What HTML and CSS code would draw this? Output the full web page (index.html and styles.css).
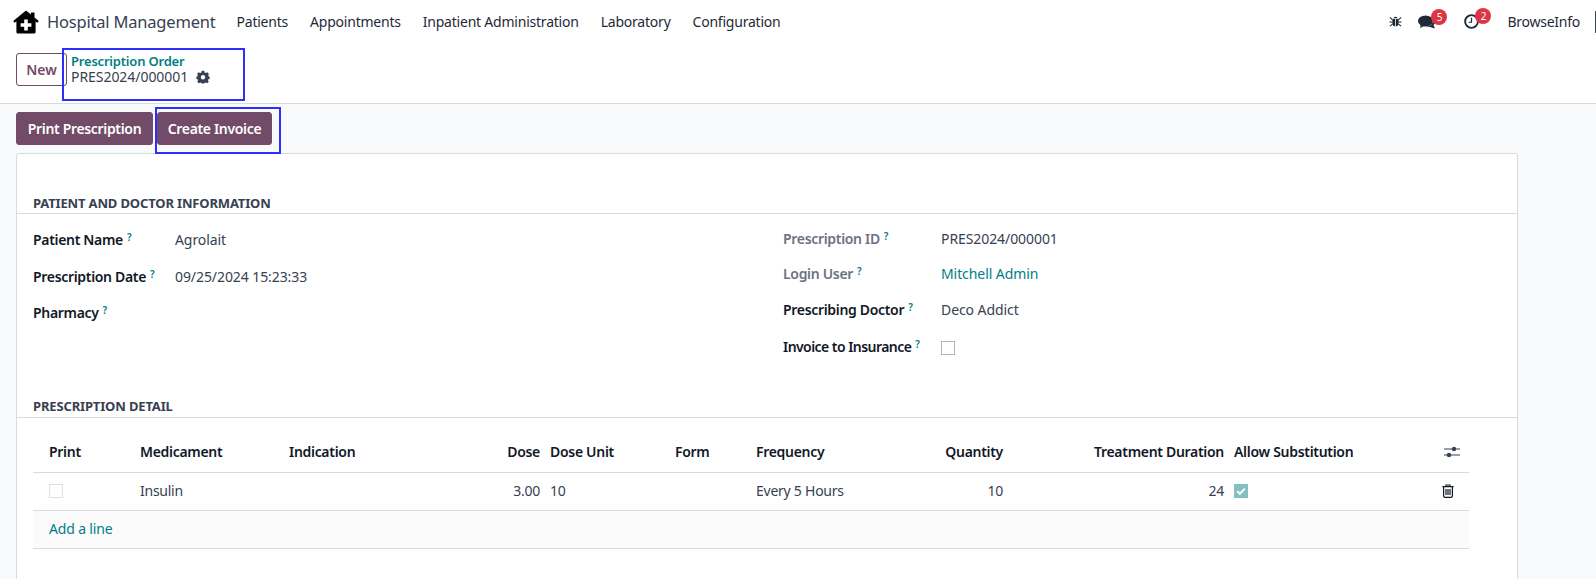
FILE: index.html
```html
<!DOCTYPE html>
<html lang="en">
<head>
<meta charset="utf-8">
<title>Prescription Order</title>
<link rel="stylesheet" href="styles.css">
</head>
<body>
<header class="navbar">
  <svg class="brand-icon" viewBox="0 0 26 24"><path d="M13 .5 L18 4.6 V2.5 H21.5 V7.4 L25.8 11 L24.4 12.8 L22.6 11.4 V22 Q22.6 23.6 21 23.6 H5 Q3.4 23.6 3.4 22 V11.4 L1.6 12.8 L.2 11 Z" fill="#000"/><path d="M11.2 9.6 H14.8 V13.2 H18.4 V16.8 H14.8 V20.4 H11.2 V16.8 H7.6 V13.2 H11.2 Z" fill="#fff"/></svg>
  <span class="brand">Hospital Management</span>
  <nav class="menu">
    <a>Patients</a><a>Appointments</a><a>Inpatient Administration</a><a>Laboratory</a><a>Configuration</a>
  </nav>
  <div class="systray">
    <svg class="bug" viewBox="0 0 14 14"><path d="M4.5 3.5 Q7 .5 9.5 3.5 Z M3.6 4.3 H6.6 V12.5 Q3.6 12 3.6 9 Z M7.4 4.3 H10.4 V9 Q10.4 12 7.4 12.5 Z" fill="#1f2a37"/><path d="M1 2.5 L3.6 5 M13 2.5 L10.4 5 M.5 7.5 H3.6 M13.5 7.5 H10.4 M1 12 L3.8 9.8 M13 12 L10.2 9.8" stroke="#1f2a37" stroke-width="1.2" fill="none"/></svg>
    <span class="tray-item chat">
      <svg class="chat-icon" viewBox="0 0 18 14"><ellipse cx="7.5" cy="6" rx="7.5" ry="5.5" fill="#1f2a37"/><path d="M3 9 L2 13 L7 10.5 Z" fill="#1f2a37"/><path d="M16 4.5 Q18.5 8 15.5 10 L17 13.5 L12 12 Q10 12 8.5 11.6 Q14.5 11 16 4.5 Z" fill="#1f2a37"/></svg>
      <span class="badge">5</span>
    </span>
    <span class="tray-item clock">
      <svg class="clock-icon" viewBox="0 0 16 16"><circle cx="8" cy="8" r="6.8" fill="none" stroke="#1f2a37" stroke-width="2"/><path d="M8 4 V8.8 H5" fill="none" stroke="#1f2a37" stroke-width="1.3"/></svg>
      <span class="badge">2</span>
    </span>
    <span class="user">BrowseInfo</span>
    <span class="edge"></span>
  </div>
</header>

<section class="control">
  <button class="btn btn-new">New</button>
  <div class="crumb">
    <a class="crumb-parent">Prescription Order</a>
    <div class="crumb-current">PRES2024/000001
      <svg class="gear" viewBox="0 0 14 14"><path fill-rule="evenodd" d="M5.8.8 H8.2 L8.6 2.5 L9.9 3.1 L11.4 2.2 L13 3.9 L12 5.3 L12.6 6.1 L13.6 6.9 V8.9 L12.4 9.2 L11.9 10.3 L12.8 11.8 L11.2 13.2 L9.8 12.4 L8.6 12.9 L8.2 13.6 H5.8 L5.4 12.9 L4.2 12.4 L2.8 13.2 L1.2 11.8 L2.1 10.3 L1.6 9.2 L.4 8.9 V6.9 L1.4 6.1 L2 5.3 L1 3.9 L2.6 2.2 L4.1 3.1 L5.4 2.5 Z M7 5 A2.2 2.2 0 1 0 7 9.4 A2.2 2.2 0 1 0 7 5 Z" fill="#374151"/></svg>
    </div>
  </div>
</section>

<main class="content">
  <div class="actions">
    <button class="btn btn-primary btn-print">Print Prescription</button>
    <button class="btn btn-primary btn-invoice">Create Invoice</button>
  </div>
  <article class="sheet">
    <h2 class="sep sep-first">PATIENT AND DOCTOR INFORMATION</h2>
    <div class="columns">
      <div class="col col-left">
        <div class="field"><label class="lbl">Patient Name<sup>?</sup></label><span class="val">Agrolait</span></div>
        <div class="field"><label class="lbl">Prescription Date<sup>?</sup></label><span class="val">09/25/2024 15:23:33</span></div>
        <div class="field"><label class="lbl">Pharmacy<sup>?</sup></label><span class="val"></span></div>
      </div>
      <div class="col col-right">
        <div class="field"><label class="lbl muted">Prescription ID<sup>?</sup></label><span class="val">PRES2024/000001</span></div>
        <div class="field"><label class="lbl muted">Login User<sup>?</sup></label><a class="val link">Mitchell Admin</a></div>
        <div class="field"><label class="lbl">Prescribing Doctor<sup>?</sup></label><span class="val">Deco Addict</span></div>
        <div class="field"><label class="lbl lbl-tight">Invoice to Insurance<sup>?</sup></label><span class="val"><span class="check check-form"></span></span></div>
      </div>
    </div>
    <h2 class="sep sep-detail">PRESCRIPTION DETAIL</h2>
    <table class="lines">
      <colgroup>
        <col class="c1"><col class="c2"><col class="c3"><col class="c4"><col class="c5"><col class="c6"><col class="c7"><col class="c8"><col class="c9"><col class="c10"><col class="c11">
      </colgroup>
      <thead>
        <tr>
          <th>Print</th><th>Medicament</th><th>Indication</th><th class="num">Dose</th><th>Dose Unit</th><th>Form</th><th>Frequency</th><th class="num">Quantity</th><th class="num">Treatment Duration</th><th>Allow Substitution</th>
          <th class="icon-cell"><svg class="sliders" viewBox="0 0 16 14"><path d="M0 4 H16 M0 10 H16" stroke="#374151" stroke-width="1.1"/><circle cx="10" cy="4" r="2.2" fill="#374151"/><circle cx="5" cy="10" r="2.2" fill="#374151"/></svg></th>
        </tr>
      </thead>
      <tbody>
        <tr>
          <td class="check-cell"><span class="check check-off"></span></td><td>Insulin</td><td></td><td class="num">3.00</td><td>10</td><td></td><td>Every 5 Hours</td><td class="num">10</td><td class="num">24</td>
          <td class="check-cell"><span class="check check-on"><svg viewBox="0 0 14 14"><path d="M3.2 7.2 L5.9 9.8 L10.8 4.6" fill="none" stroke="#fff" stroke-width="2"/></svg></span></td>
          <td class="icon-cell"><svg class="trash" viewBox="0 0 12 14"><path d="M4 2.4 V1 H8 V2.4 M.4 2.6 H11.6 M1.6 2.6 V12 Q1.6 13.3 3 13.3 H9 Q10.4 13.3 10.4 12 V2.6 M4 5 V11 M6 5 V11 M8 5 V11" fill="none" stroke="#111827" stroke-width="1.2"/></svg></td>
        </tr>
      </tbody>
      <tfoot>
        <tr><td colspan="11"><a class="link">Add a line</a></td></tr>
      </tfoot>
    </table>
  </article>
</main>

<div class="highlight hl-crumb"></div>
<div class="highlight hl-invoice"></div>
</body>
</html>
```
FILE: styles.css
```css
* { box-sizing: border-box; }
html, body { margin: 0; height: 579px; overflow: hidden; }
body {
  position: relative;
  font-family: "Noto Sans", "Open Sans", sans-serif;
  font-size: 14px;
  letter-spacing: -0.17px;
  color: #374151;
  background: #f9fafb;
}
.navbar {
  height: 46px;
  background: #fff;
  display: flex;
  align-items: center;
  padding: 0 0 3px 13px;
  color: #1f2a37;
}
.brand-icon { width: 26px; height: 24px; }
.brand { margin-left: 8px; font-size: 16.5px; letter-spacing: -0.2px; color: #374151; }
.menu { display: flex; gap: 22px; margin-left: 21px; letter-spacing: -0.22px; }
.systray { margin-left: auto; display: flex; align-items: center; }
.bug { width: 13px; height: 13px; margin-right: 16px; }
.tray-item { position: relative; display: block; }
.chat { width: 18px; height: 14px; margin-right: 28px; }
.chat-icon { width: 18px; height: 14px; display: block; }
.clock { width: 15px; height: 15px; margin-right: 28px; }
.clock-icon { width: 15px; height: 15px; display: block; }
.badge {
  position: absolute;
  top: -6px;
  left: 13px;
  width: 16px;
  height: 16px;
  border-radius: 8px;
  background: #dc3545;
  color: #fff;
  font-size: 10px;
  line-height: 16px;
  text-align: center;
}
.clock .badge { left: 11px; }
.user { font-size: 14px; letter-spacing: -0.25px; }
.edge { width: 1px; height: 22px; background: #3f4a59; margin-left: 15px; }
.control {
  height: 58px;
  background: #fff;
  border-bottom: 1px solid #d8dadd;
  display: flex;
  align-items: flex-start;
  padding: 7px 0 0 16px;
}
.btn {
  font: inherit;
  font-weight: 500;
  border-radius: 3px;
  height: 33px;
  padding: 0;
  cursor: pointer;
}
.btn-new { background: #fff; border: 1px solid #714b67; color: #714b67; width: 51px; font-weight: 600; }
.crumb { margin-left: 4px; line-height: 16px; }
.crumb-parent { display: block; color: #017e84; font-weight: 600; font-size: 13px; letter-spacing: -0.2px; }
.crumb-current { display: flex; align-items: center; gap: 8px; color: #374151; letter-spacing: -0.05px; }
.gear { width: 14px; height: 14px; }
.content { padding: 8px 16px 0; }
.actions { display: flex; gap: 4px; height: 33px; }
.btn-primary { background: #714b67; border: 1px solid #714b67; color: #fff; font-weight: 600; letter-spacing: -0.33px; }
.btn-print { width: 137px; }
.btn-invoice { width: 115px; }
.sheet {
  margin-top: 8px;
  width: 1502px;
  height: 431px;
  background: #fff;
  border: 1px solid #d8dadd;
  border-radius: 3px 3px 0 0;
}
.sep {
  margin: 0;
  padding: 0 0 3px 16px;
  font-size: 13px;
  font-weight: 700;
  line-height: 17px;
  letter-spacing: -0.15px;
  color: #374151;
  border-bottom: 1px solid #d8dadd;
}
.sep-first { margin-top: 41px; padding-bottom: 1px; }
.sep-detail { margin-top: 28px; padding-bottom: 2px; }
.columns { display: flex; height: 156px; padding-left: 16px; }
.col-left { width: 750px; padding-top: 7px; }
.col-right { flex: 1; padding-top: 7px; }
.field { display: flex; align-items: center; }
.col-left .field { height: 36.7px; }
.col-right .field { height: 36px; }
.col-right .field:first-child { height: 34px; }
.col-right .field:last-child { height: 38px; }
.lbl { font-weight: 600; color: #111827; letter-spacing: -0.32px; }
.lbl-tight { letter-spacing: -0.55px; }
.lbl.muted { color: #6b7280; }
.lbl sup { color: #017e84; font-size: 10px; margin-left: 4px; font-weight: 600; vertical-align: 4px; line-height: 0; }
.col-left .lbl { width: 142px; }
.col-right .lbl { width: 158px; }
.val { color: #374151; letter-spacing: -0.08px; }
.link { color: #017e84; }
.check { display: inline-block; width: 14px; height: 14px; vertical-align: middle; }
.check-form { border: 1px solid #adb5bd; background: #fff; }
.check-off { border: 1px solid #dee2e6; background: #fff; }
.check-on { background: #84bfc1; }
.check-on svg { display: block; width: 14px; height: 14px; }
.lines {
  margin-left: 16px;
  width: 1436px;
  table-layout: fixed;
  border-collapse: collapse;
}
.c1 { width: 102px; } .c2 { width: 149px; } .c3 { width: 140px; } .c4 { width: 121px; } .c5 { width: 125px; }
.c6 { width: 81px; } .c7 { width: 140px; } .c8 { width: 117px; } .c9 { width: 221px; } .c10 { width: 212px; } .c11 { width: 28px; }
.lines th, .lines td { padding: 0 5px; white-space: nowrap; text-align: left; }
.lines th:first-child, .lines td:first-child { padding-left: 16px; }
.lines th { height: 54px; padding-top: 14px; font-weight: 600; letter-spacing: -0.3px; color: #111827; border-bottom: 1px solid #d8dadd; }
.lines tbody td { height: 38px; padding-bottom: 2px; border-bottom: 1px solid #d8dadd; letter-spacing: -0.25px; }
.lines tbody td.check-cell { padding-bottom: 4px; }
.lines tfoot td { height: 38px; padding-bottom: 2px; background: #fbfbfb; border-bottom: 1px solid #d8dadd; }
.lines .num { text-align: right; padding-right: 5px; }
.lines th.icon-cell { padding: 14px 0 0 3px; }
.lines tbody td.icon-cell { padding: 0 0 0 1px; }
.sliders { width: 16px; height: 14px; display: block; }
.trash { width: 12px; height: 14px; display: block; }
.highlight { position: absolute; border: 2px solid #2e2eff; }
.hl-crumb { left: 62px; top: 48px; width: 183px; height: 53px; }
.hl-invoice { left: 155px; top: 107px; width: 126px; height: 47px; }
```
